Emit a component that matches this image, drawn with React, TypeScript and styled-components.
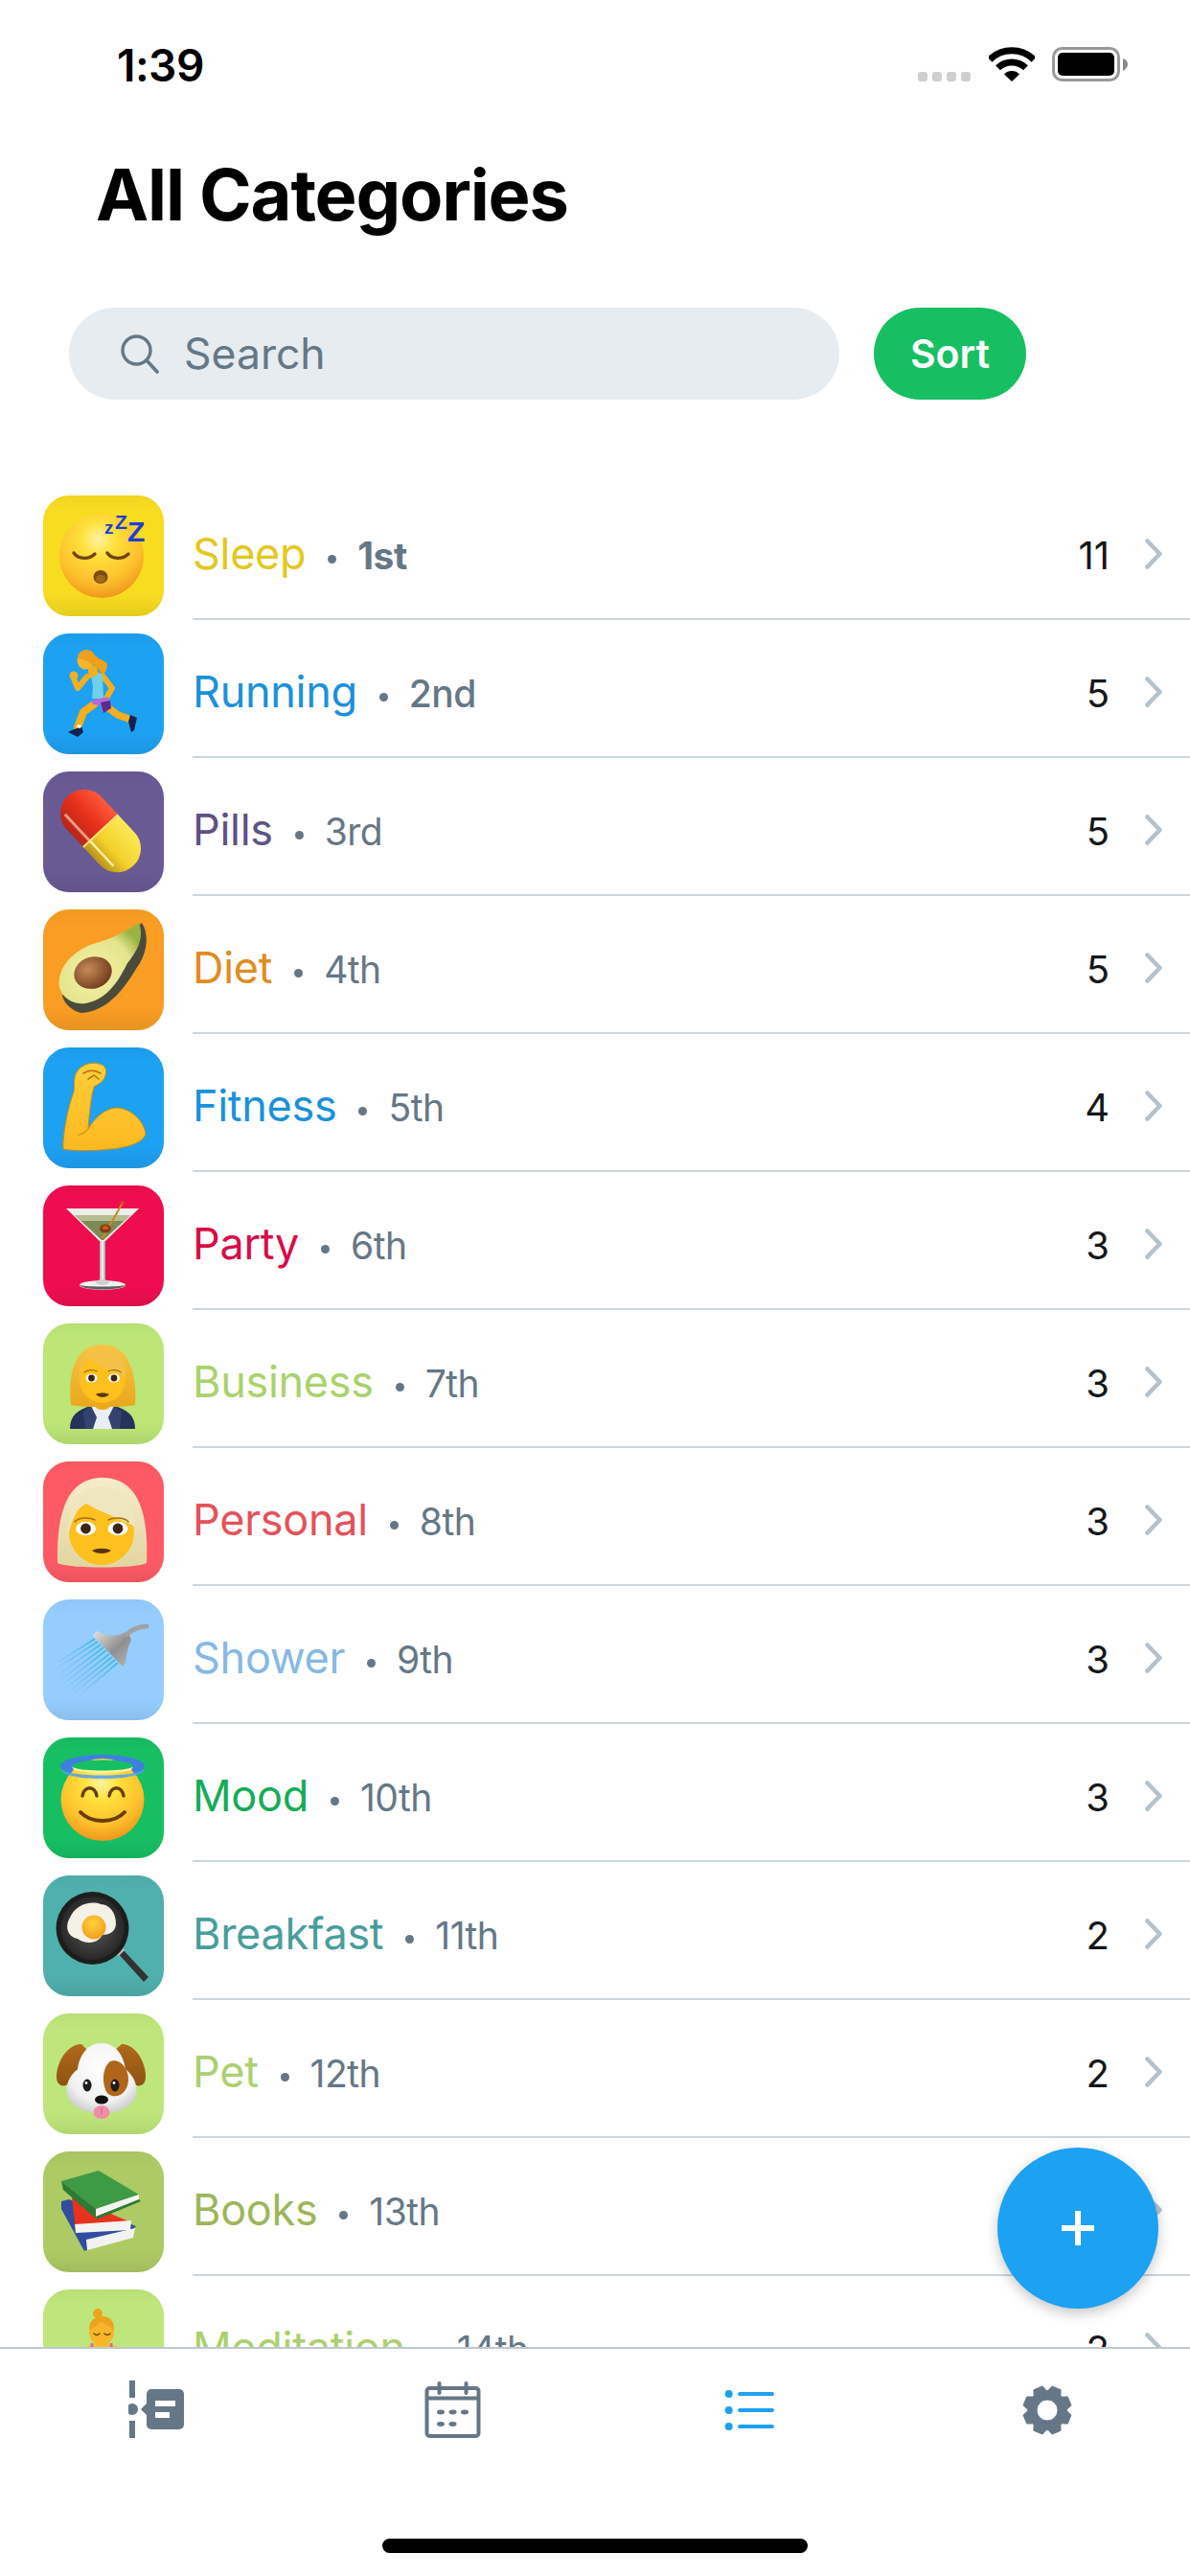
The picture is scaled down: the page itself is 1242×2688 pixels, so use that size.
import React from 'react';
import styled, { createGlobalStyle } from 'styled-components';

const GlobalStyle = createGlobalStyle`
  html, body {
    margin: 0;
    padding: 0;
    background: #fff;
  }
  * {
    box-sizing: border-box;
  }
`;

const Page = styled.div`
  position: relative;
  width: 1242px;
  height: 2688px;
  display: flex;
  flex-direction: column;
  overflow: hidden;
  background: #fff;
  font-family: Inter, 'Liberation Sans', sans-serif;
  color: #14171a;
`;

const StatusBar = styled.div`
  height: 130px;
  flex: none;
  display: flex;
  align-items: flex-start;
  padding: 49px 0 0 122px;
`;

const Time = styled.span`
  font-size: 46px;
  font-weight: 600;
  line-height: 38px;
  letter-spacing: -0.5px;
  color: #000;
`;

const StatusIcons = styled.div`
  margin-left: auto;
  margin-right: 64px;
  display: flex;
  align-items: flex-end;
  height: 36px;
`;

const SignalDots = styled.div`
  display: flex;
  gap: 5px;
  margin-right: 19px;
`;

const SignalDot = styled.span`
  width: 10px;
  height: 10px;
  border-radius: 3px;
  background: #cfcfcf;
`;

const WifiIcon = styled.svg`
  display: block;
  flex: none;
  margin-right: 18px;
`;

const BatteryIcon = styled.svg`
  display: block;
  flex: none;
`;

const Title = styled.h1`
  flex: none;
  margin: 0;
  height: 147px;
  line-height: 147px;
  padding-left: 100px;
  font-size: 74px;
  font-weight: 700;
  letter-spacing: -1.2px;
  color: #000;
`;

const SearchRow = styled.div`
  flex: none;
  margin-top: 44px;
  padding-left: 72px;
  display: flex;
  gap: 36px;
`;

const SearchField = styled.div`
  width: 804px;
  height: 96px;
  border-radius: 48px;
  background: #e6ecf0;
  display: flex;
  align-items: center;
  padding-left: 54px;
  gap: 26px;
  font-size: 44.5px;
  color: #657786;
`;

const SearchIcon = styled.svg`
  display: block;
  flex: none;
`;

const SortButton = styled.div`
  width: 159px;
  height: 96px;
  border-radius: 48px;
  background: #17bf63;
  color: #fff;
  display: flex;
  align-items: center;
  justify-content: center;
  font-size: 41px;
  font-weight: 600;
`;

const List = styled.div`
  flex: 1;
  min-height: 0;
  margin-top: 86px;
  overflow: hidden;
`;

const Row = styled.div`
  display: flex;
  height: 144px;
  padding-left: 45px;
`;

const IconTile = styled.div<{ $bg: string }>`
  position: relative;
  flex: none;
  width: 126px;
  height: 126px;
  margin-top: 14px;
  border-radius: 27px;
  overflow: hidden;
  background-color: ${({ $bg }) => $bg};
  background-image: linear-gradient(
    to bottom,
    rgba(0, 0, 0, 0.03),
    rgba(0, 0, 0, 0) 12%,
    rgba(0, 0, 0, 0) 82%,
    rgba(0, 0, 0, 0.07)
  );
`;

const EmojiSvg = styled.svg.attrs({ viewBox: '0 0 126 126', width: 126, height: 126 })`
  display: block;
`;

const RowBody = styled.div`
  flex: 1;
  margin-left: 30px;
  height: 144px;
  padding-top: 7px;
  line-height: 135px;
  border-bottom: 2px solid #ccd6dd;
  display: flex;
  align-items: baseline;
`;

const Name = styled.span<{ $color: string }>`
  font-size: 45px;
  letter-spacing: -0.3px;
  color: ${({ $color }) => $color};
`;

const Dot = styled.span`
  width: 9px;
  height: 9px;
  border-radius: 50%;
  background: #657786;
  margin: 11px 22px 0 23px;
  align-self: center;
`;

const Rank = styled.span<{ $weight: number }>`
  font-size: 39px;
  letter-spacing: -0.5px;
  color: #657786;
  font-weight: ${({ $weight }) => $weight};
`;

const Count = styled.span`
  margin-left: auto;
  margin-right: 37px;
  font-size: 40px;
  color: #14171a;
`;

const Chevron = styled.svg`
  display: block;
  flex: none;
  align-self: center;
  margin-right: 29px;
`;

const TabBar = styled.div`
  flex: none;
  position: relative;
  height: 239px;
  border-top: 2px solid #bcc8d2;
  background: #fff;
  padding: 33px 122px 0 134px;
  display: flex;
  justify-content: space-between;
  align-items: flex-start;
`;

const TabIcon = styled.svg.attrs({ viewBox: '0 0 60 64', width: 60, height: 64 })`
  display: block;
`;

const HomeIndicator = styled.div`
  position: absolute;
  left: 399px;
  top: 198px;
  width: 444px;
  height: 15px;
  border-radius: 8px;
  background: #000;
`;

const Fab = styled.div`
  position: absolute;
  left: 1041px;
  top: 2241px;
  width: 168px;
  height: 168px;
  border-radius: 50%;
  background: #1da1f2;
  box-shadow: 0 5px 14px rgba(0, 0, 0, 0.22);
  display: flex;
  align-items: center;
  justify-content: center;
`;

const FACE_STOPS = (
  <>
    <stop offset="0" stopColor="#fff3a0" />
    <stop offset="0.28" stopColor="#ffe03a" />
    <stop offset="0.68" stopColor="#fdbf2c" />
    <stop offset="1" stopColor="#ec8c18" />
  </>
);

const SleepEmoji = () => (
  <EmojiSvg>
    <defs>
      <radialGradient id="sleepFace" cx="0.46" cy="0.3" r="0.76">{FACE_STOPS}</radialGradient>
    </defs>
    <ellipse cx="61" cy="63" rx="44" ry="44" fill="url(#sleepFace)" />
    <path d="M32 60c5 7 16 7 22 1" fill="none" stroke="#6e4510" strokeWidth="3.4" strokeLinecap="round" />
    <path d="M67 60c5 7 16 7 22 1" fill="none" stroke="#6e4510" strokeWidth="3.4" strokeLinecap="round" />
    <ellipse cx="60" cy="85" rx="7.5" ry="7" fill="#7c4c12" />
    <ellipse cx="60" cy="87" rx="5" ry="4" fill="#a06a1c" />
    <g fill="#1c3fd2" fontFamily="'Liberation Sans', sans-serif" fontWeight="700">
      <text x="64" y="40" fontSize="19">z</text>
      <text x="75" y="35" fontSize="21">Z</text>
      <text x="88" y="48" fontSize="30">Z</text>
    </g>
  </EmojiSvg>
);

const RunningEmoji = () => (
  <EmojiSvg>
    <g fill="none" stroke="#f4ae1e" strokeLinecap="round" strokeLinejoin="round">
      <path d="M46 45L36 57L32 47" strokeWidth="6" />
      <path d="M62 44L72 57L64 71" strokeWidth="6" />
      <path d="M53 74L42 82L36 98" strokeWidth="8" />
      <path d="M66 76L78 85L92 90" strokeWidth="7.5" />
    </g>
    <circle cx="32" cy="44" r="4.5" fill="#f4ae1e" />
    <path d="M50 44L59 41L62 44L63 68L51 68L52 56Z" fill="#6fd0ea" />
    <path d="M50 70L68 66L71 78L62 82L60 75L52 74Z" fill="#b46bd9" />
    <path d="M60 72L70 70L71 78L63 83Z" fill="#5c2a91" />
    <path d="M49 47C46 40 47 36 48 32L56 34L58 42Z" fill="#f4ae1e" />
    <ellipse cx="44" cy="28" rx="8.5" ry="9.5" fill="#f7b52a" />
    <path d="M36 26C36 18 46 14 52 20C56 26 62 28 66 30C68 34 66 40 62 44C58 38 56 32 50 32C46 28 40 26 36 26Z" fill="#eda01c" />
    <path d="M30 101L40 97L42 103L36 108L26 103Z" fill="#13224f" />
    <path d="M36 95L40 96L39 99L35 98Z" fill="#fff" />
    <path d="M91 85L98 88L95 101L92 103L89 92Z" fill="#13224f" />
  </EmojiSvg>
);

const PillsEmoji = () => (
  <EmojiSvg>
    <defs>
      <linearGradient id="pillRed" x1="0" y1="0" x2="0" y2="1">
        <stop offset="0" stopColor="#ff5a3c" />
        <stop offset="0.5" stopColor="#e8301a" />
        <stop offset="1" stopColor="#b3261a" />
      </linearGradient>
      <linearGradient id="pillYellow" x1="0" y1="0" x2="0" y2="1">
        <stop offset="0" stopColor="#fdea58" />
        <stop offset="0.6" stopColor="#f3d02a" />
        <stop offset="1" stopColor="#b8921c" />
      </linearGradient>
      <clipPath id="pillClip">
        <rect x="-50" y="-25" width="100" height="50" rx="25" />
      </clipPath>
    </defs>
    <g transform="translate(60 62) rotate(47)" clipPath="url(#pillClip)">
      <rect x="-50" y="-25" width="50" height="50" fill="url(#pillRed)" />
      <rect x="0" y="-25" width="50" height="50" fill="url(#pillYellow)" />
      <rect x="-38" y="14" width="38" height="3" fill="#f7b7a0" opacity="0.8" />
      <rect x="0" y="14" width="36" height="2.5" fill="#fff6b0" opacity="0.9" />
      <rect x="-1" y="-25" width="2" height="50" fill="#f9e27a" />
    </g>
  </EmojiSvg>
);

const AvocadoEmoji = () => (
  <EmojiSvg>
    <defs>
      <radialGradient id="avoFlesh" cx="0.42" cy="0.62" r="0.66">
        <stop offset="0" stopColor="#f6f0a4" />
        <stop offset="0.72" stopColor="#e3e48c" />
        <stop offset="1" stopColor="#9ab443" />
      </radialGradient>
      <radialGradient id="avoPit" cx="0.4" cy="0.35" r="0.7">
        <stop offset="0" stopColor="#c68a58" />
        <stop offset="1" stopColor="#6e3a1c" />
      </radialGradient>
    </defs>
    <path d="M103 14C111 26 109 46 97 62C85 82 68 106 40 108C30 106 22 98 20 90C40 60 80 30 103 14Z" fill="#4b4b3c" />
    <path d="M100 14C106 30 98 44 88 56C80 72 68 94 44 98C28 100 14 88 17 72C20 54 36 42 52 36C68 32 84 24 100 14Z" fill="url(#avoFlesh)" />
    <ellipse cx="52" cy="66" rx="20" ry="16.5" transform="rotate(-18 52 66)" fill="url(#avoPit)" />
  </EmojiSvg>
);

const MuscleEmoji = () => (
  <EmojiSvg>
    <defs>
      <linearGradient id="armFill" x1="0" y1="0" x2="0" y2="1">
        <stop offset="0" stopColor="#ffd03a" />
        <stop offset="1" stopColor="#fbb81f" />
      </linearGradient>
    </defs>
    <path
      d="M33 31C35 20 48 14 58 17C65 18 67 24 65 29C64 35 58 38 53 41C50 52 48 70 47 85C52 76 63 64 76 63C92 63 105 77 107 90C105 100 85 106 60 107C45 108 30 108 21 106C20 92 26 62 32 46C33 40 32 36 33 31Z"
      fill="url(#armFill)"
      stroke="#cf8a17"
      strokeWidth="1"
    />
    <path d="M42 27C48 23 55 24 60 27M47 33L53 29L58 33" fill="none" stroke="#b97712" strokeWidth="1.6" strokeLinecap="round" />
    <path d="M47 85C44 88 40 91 37 91" fill="none" stroke="#d9951b" strokeWidth="1.4" strokeLinecap="round" />
  </EmojiSvg>
);

const MartiniEmoji = () => (
  <EmojiSvg>
    <defs>
      <linearGradient id="stemGlass" x1="0" y1="0" x2="1" y2="0">
        <stop offset="0" stopColor="#a7a9a8" />
        <stop offset="0.5" stopColor="#f6f6f6" />
        <stop offset="1" stopColor="#9a9c9b" />
      </linearGradient>
    </defs>
    <path d="M24 24L100 24L64 59L60 59Z" fill="#ededea" />
    <path d="M33 31L91 31L63 57L61 57Z" fill="#7c8a55" />
    <path d="M33 31L91 31L84 37L40 37Z" fill="#b6bd92" />
    <path d="M83 18L62 55" stroke="#c98a1e" strokeWidth="2" />
    <circle cx="83" cy="18" r="1.8" fill="#d24a1c" />
    <ellipse cx="65" cy="45" rx="6" ry="4.5" fill="#8a3b18" />
    <ellipse cx="65" cy="44" rx="3" ry="2" fill="#c1601f" />
    <rect x="59" y="58" width="6" height="42" fill="url(#stemGlass)" />
    <ellipse cx="62" cy="104" rx="24" ry="5" fill="#f1f1f0" />
    <path d="M38 104C42 110 82 110 86 104C78 106 46 106 38 104Z" fill="#5d5e5e" />
    <ellipse cx="62" cy="101" rx="7" ry="3" fill="#cfcfcf" />
  </EmojiSvg>
);

const BusinessEmoji = () => (
  <EmojiSvg>
    <defs>
      <linearGradient id="bizHair" x1="0" y1="0" x2="0" y2="1">
        <stop offset="0" stopColor="#f6c544" />
        <stop offset="1" stopColor="#e9a81d" />
      </linearGradient>
    </defs>
    <path d="M28 110C28 96 36 90 50 86L74 86C88 90 96 96 96 110Z" fill="#25325a" />
    <path d="M50 86L74 86L72 110L52 110Z" fill="#e9eef2" />
    <path d="M50 86L56 98L52 110L44 110L42 92Z" fill="#33426f" />
    <path d="M74 86L68 98L72 110L80 110L82 92Z" fill="#33426f" />
    <path d="M29 85C26 58 30 22 62 22C92 22 98 58 96 85C84 88 40 88 29 85Z" fill="url(#bizHair)" />
    <rect x="54" y="72" width="16" height="18" rx="6" fill="#eda91e" />
    <ellipse cx="62" cy="58" rx="24" ry="25" fill="#fdc01d" />
    <path d="M38 60C39 48 42 40 46 35C56 44 72 50 86 56C88 38 78 26 62 26C46 26 35 42 38 60Z" fill="#f4c146" />
    <ellipse cx="50.5" cy="57" rx="6" ry="4.6" fill="#fff" />
    <ellipse cx="74" cy="57" rx="6" ry="4.6" fill="#fff" />
    <circle cx="50.5" cy="57" r="3.4" fill="#3d2610" />
    <circle cx="74" cy="57" r="3.4" fill="#3d2610" />
    <path d="M43 51C46 48 53 48 56 50M68 50C71 48 78 48 81 51" fill="none" stroke="#a4701c" strokeWidth="1.2" strokeLinecap="round" />
    <path d="M55 74C59 72 65 72 69 74C65 78 59 78 55 74Z" fill="#5c3212" />
  </EmojiSvg>
);

const PersonalEmoji = () => (
  <EmojiSvg>
    <defs>
      <linearGradient id="blondeHair" x1="0" y1="0" x2="0" y2="1">
        <stop offset="0" stopColor="#f5eccb" />
        <stop offset="1" stopColor="#e2d5a0" />
      </linearGradient>
    </defs>
    <path d="M15 106C14 60 22 17 62 17C102 17 110 60 108 106C98 112 26 112 15 106Z" fill="url(#blondeHair)" />
    <ellipse cx="61" cy="74" rx="34" ry="34" fill="#fdc01d" />
    <path d="M26 78C29 62 36 50 42 42C56 52 78 58 96 68C96 42 82 26 60 26C38 28 23 52 26 78Z" fill="#efe5bf" />
    <ellipse cx="44.5" cy="70" rx="10.5" ry="7.2" fill="#fff" />
    <ellipse cx="78" cy="70" rx="10.5" ry="7.2" fill="#fff" />
    <circle cx="44.5" cy="70" r="5.4" fill="#3d2610" />
    <circle cx="78" cy="70" r="5.4" fill="#3d2610" />
    <path d="M33 63C37 58 48 58 54 61M68 61C74 58 85 58 89 63" fill="none" stroke="#a4701c" strokeWidth="1.6" strokeLinecap="round" />
    <path d="M51 93C56 90 66 90 71 93C66 97 56 97 51 93Z" fill="#5c3212" />
  </EmojiSvg>
);

const ShowerEmoji = () => (
  <EmojiSvg>
    <defs>
      <linearGradient id="spray" x1="1" y1="0" x2="0" y2="1">
        <stop offset="0" stopColor="#3cbce0" />
        <stop offset="1" stopColor="#7db4ea" stopOpacity="0.15" />
      </linearGradient>
      <linearGradient id="headMetal" x1="0" y1="0" x2="1" y2="1">
        <stop offset="0" stopColor="#e4e4e4" />
        <stop offset="0.55" stopColor="#8f8f8f" />
        <stop offset="1" stopColor="#b9b9b9" />
      </linearGradient>
    </defs>
    <g stroke="url(#spray)" strokeWidth="1.8" fill="none">
      <path d="M54 41L15 66" />
      <path d="M57 44L14 72" />
      <path d="M60 47L16 78" />
      <path d="M63 50L18 84" />
      <path d="M66 53L21 88" />
      <path d="M69 57L24 92" />
      <path d="M72 60L28 95" />
      <path d="M75 63L33 97" />
      <path d="M78 66L40 98" />
    </g>
    <path d="M52 38L83 70L86 66C87 58 88 50 92 42L88 33C80 38 68 40 56 33Z" fill="url(#headMetal)" />
    <path d="M88 36C92 32 100 28 108 28" fill="none" stroke="#a2a2a2" strokeWidth="5" strokeLinecap="round" />
  </EmojiSvg>
);

const AngelEmoji = () => (
  <EmojiSvg>
    <defs>
      <radialGradient id="angelFace" cx="0.48" cy="0.3" r="0.75">{FACE_STOPS}</radialGradient>
    </defs>
    <ellipse cx="62" cy="30" rx="44" ry="12" fill="#3f7fe0" />
    <ellipse cx="62" cy="65" rx="43.5" ry="43" fill="url(#angelFace)" />
    <path d="M18 32C20 42 104 42 106 32C106 38 92 43 62 43C32 43 18 38 18 32Z" fill="#5aa2ee" opacity="0.9" />
    <ellipse cx="62" cy="30" rx="32" ry="6.5" fill="#17bf63" />
    <path d="M30 30C32 36 92 36 94 30L92 34C80 38 44 38 32 34Z" fill="#fff3a0" />
    <path d="M41 61C43 50 54 50 56 61M69 61C71 50 82 50 84 61" fill="none" stroke="#6b3d0d" strokeWidth="3.4" strokeLinecap="round" />
    <path d="M39 78C50 90 74 90 85 78" fill="none" stroke="#6b3d0d" strokeWidth="4" strokeLinecap="round" />
  </EmojiSvg>
);

const EggEmoji = () => (
  <EmojiSvg>
    <defs>
      <radialGradient id="panFill" cx="0.5" cy="0.5" r="0.55">
        <stop offset="0" stopColor="#5a5a5a" />
        <stop offset="1" stopColor="#232323" />
      </radialGradient>
      <radialGradient id="yolkFill" cx="0.45" cy="0.35" r="0.7">
        <stop offset="0" stopColor="#ffd23c" />
        <stop offset="1" stopColor="#f09a1c" />
      </radialGradient>
    </defs>
    <path d="M76 79L82 76L110 106L105 111Z" fill="#333" />
    <path d="M74 78L80 73L85 78L79 84Z" fill="#bbb" />
    <circle cx="51.5" cy="55" r="38" fill="#1d1d1d" />
    <circle cx="51.5" cy="55" r="33" fill="url(#panFill)" />
    <path d="M28 44C34 30 50 26 60 30C70 30 76 40 76 50C76 58 70 62 62 62C56 72 44 72 36 66C26 64 22 54 28 44Z" fill="#f4f1e6" />
    <circle cx="53" cy="54" r="12.5" fill="url(#yolkFill)" />
  </EmojiSvg>
);

const DogEmoji = () => (
  <EmojiSvg>
    <defs>
      <radialGradient id="dogFace" cx="0.5" cy="0.35" r="0.7">
        <stop offset="0" stopColor="#ffffff" />
        <stop offset="0.7" stopColor="#f1f1f1" />
        <stop offset="1" stopColor="#c6c6c6" />
      </radialGradient>
      <linearGradient id="dogEar" x1="0" y1="0" x2="0" y2="1">
        <stop offset="0" stopColor="#b06a1a" />
        <stop offset="1" stopColor="#8f5212" />
      </linearGradient>
    </defs>
    <path d="M40 32C26 32 14 50 14 66C14 76 22 78 28 72C36 64 44 52 48 40Z" fill="url(#dogEar)" />
    <path d="M82 32C96 32 107 50 107 66C107 76 99 78 93 72C85 64 77 52 73 40Z" fill="url(#dogEar)" />
    <path d="M61 31C76 31 84 44 86 58C96 66 100 78 96 88C90 100 76 104 61 104C46 104 32 100 26 88C22 78 26 66 36 58C38 44 46 31 61 31Z" fill="url(#dogFace)" />
    <path d="M70 50C80 46 90 58 89 70C88 84 76 90 68 84C62 78 60 58 70 50Z" fill="#b0661a" />
    <ellipse cx="46" cy="75" rx="4.5" ry="6.5" fill="#1d1d1d" />
    <ellipse cx="75" cy="75" rx="4.5" ry="6.5" fill="#1d1d1d" />
    <circle cx="45" cy="72.5" r="1.4" fill="#fff" />
    <circle cx="74" cy="72.5" r="1.4" fill="#fff" />
    <ellipse cx="61" cy="90" rx="7" ry="4.5" fill="#111" />
    <ellipse cx="61" cy="103" rx="8.5" ry="7" fill="#f08ca8" />
    <path d="M61 98L61 105" stroke="#d66f8c" strokeWidth="1.4" />
  </EmojiSvg>
);

const BooksEmoji = () => (
  <EmojiSvg>
    <path d="M19 52L27 50L97 78L90 85L43 104L19 60Z" fill="#2f4ea0" />
    <path d="M45 92L96 80L94 90L46 103Z" fill="#f2f2f0" />
    <path d="M30 48L92 74L88 78L34 84Z" fill="#e8321e" />
    <path d="M33 76L92 72L91 82L34 85Z" fill="#f4f4f2" />
    <path d="M30 48L34 84L33 76Z" fill="#b72315" />
    <path d="M19 31L58 20L100 45L55 60Z" fill="#3d9a45" />
    <path d="M19 31L55 60L55 70L21 40Z" fill="#2c7a36" />
    <path d="M55 60L100 45L100 50L55 68Z" fill="#f4f4f2" />
    <path d="M55 68L100 50L102 52L56 71Z" fill="#2c7a36" />
  </EmojiSvg>
);

const MeditationEmoji = () => (
  <EmojiSvg>
    <circle cx="57" cy="25" r="5" fill="#eda41c" />
    <path d="M45 60C50 56 72 56 77 60L80 90L42 90Z" fill="#f8bf24" />
    <path d="M51 56L51 66M71 56L71 66" stroke="#d66f8c" strokeWidth="3" />
    <ellipse cx="61" cy="44" rx="13" ry="15" fill="#f7b52a" />
    <path d="M48 42C48 32 54 28 62 28C70 28 75 34 74 43C70 38 64 36 60 34C56 38 52 40 48 42Z" fill="#eda41c" />
    <path d="M53 46C55 48 57 48 59 46M64 46C66 48 68 48 70 46" fill="none" stroke="#6e4510" strokeWidth="1.4" strokeLinecap="round" />
  </EmojiSvg>
);

type Category = {
  name: string;
  rank: string;
  count: number;
  bg: string;
  color: string;
  weight: number;
  Emoji: () => React.JSX.Element;
};

const categories: Category[] = [
  { name: 'Sleep', rank: '1st', count: 11, bg: '#f7dc20', color: '#e3c81e', weight: 700, Emoji: SleepEmoji },
  { name: 'Running', rank: '2nd', count: 5, bg: '#1da1f2', color: '#1a91da', weight: 500, Emoji: RunningEmoji },
  { name: 'Pills', rank: '3rd', count: 5, bg: '#6a5a94', color: '#5f5185', weight: 400, Emoji: PillsEmoji },
  { name: 'Diet', rank: '4th', count: 5, bg: '#f99d23', color: '#e08d1f', weight: 400, Emoji: AvocadoEmoji },
  { name: 'Fitness', rank: '5th', count: 4, bg: '#1da1f2', color: '#1a91da', weight: 400, Emoji: MuscleEmoji },
  { name: 'Party', rank: '6th', count: 3, bg: '#f00d4f', color: '#d80c47', weight: 400, Emoji: MartiniEmoji },
  { name: 'Business', rank: '7th', count: 3, bg: '#bde677', color: '#aad26b', weight: 400, Emoji: BusinessEmoji },
  { name: 'Personal', rank: '8th', count: 3, bg: '#fe5a65', color: '#e5515b', weight: 400, Emoji: PersonalEmoji },
  { name: 'Shower', rank: '9th', count: 3, bg: '#95cdff', color: '#86b8e5', weight: 400, Emoji: ShowerEmoji },
  { name: 'Mood', rank: '10th', count: 3, bg: '#17bf63', color: '#15ac59', weight: 400, Emoji: AngelEmoji },
  { name: 'Breakfast', rank: '11th', count: 2, bg: '#50b0ad', color: '#489e9c', weight: 400, Emoji: EggEmoji },
  { name: 'Pet', rank: '12th', count: 2, bg: '#bfe67a', color: '#acd06e', weight: 400, Emoji: DogEmoji },
  { name: 'Books', rank: '13th', count: 2, bg: '#aeca64', color: '#9db65a', weight: 400, Emoji: BooksEmoji },
  { name: 'Meditation', rank: '14th', count: 2, bg: '#bfe67a', color: '#acd06e', weight: 400, Emoji: MeditationEmoji },
];

// eight rounded teeth, rotated half a step so a notch sits on top
const gearPath = (cx: number, cy: number) => {
  const pts: string[] = [];
  for (let i = 0; i < 8; i++) {
    const a = i * 45 + 22.5;
    [
      [a - 20, 20.5],
      [a - 11, 25.5],
      [a + 11, 25.5],
      [a + 20, 20.5],
    ].forEach(([deg, r]) => {
      const rad = (deg * Math.PI) / 180;
      pts.push(`${(cx + r * Math.cos(rad)).toFixed(2)} ${(cy + r * Math.sin(rad)).toFixed(2)}`);
    });
  }
  const hole = `M${cx - 11} ${cy}a11 11 0 1 0 22 0a11 11 0 1 0 -22 0Z`;
  return `M${pts.join('L')}Z${hole}`;
};

const App = () => {
  return (
    <Page>
      <GlobalStyle />
      <StatusBar>
        <Time>1:39</Time>
        <StatusIcons>
          <SignalDots>
            <SignalDot />
            <SignalDot />
            <SignalDot />
            <SignalDot />
          </SignalDots>
          <WifiIcon width="48" height="36" viewBox="0 0 48 36">
            <g fill="none" stroke="#000" strokeWidth="7">
              <path d="M1 13.2A33 33 0 0 1 47 13.2" />
              <path d="M9.5 21.7A21 21 0 0 1 38.5 21.7" />
            </g>
            <path d="M16 28.5A11 11 0 0 1 32 28.5L24 36Z" fill="#000" />
          </WifiIcon>
          <BatteryIcon width="80" height="36" viewBox="0 0 80 36">
            <rect x="1.5" y="1.5" width="68" height="33" rx="9" fill="none" stroke="#999" strokeWidth="3" />
            <rect x="6" y="6" width="59" height="24" rx="5" fill="#000" />
            <path d="M74 12C77 13 79 15 79 18C79 21 77 23 74 25Z" fill="#888" />
          </BatteryIcon>
        </StatusIcons>
      </StatusBar>

      <Title>All Categories</Title>

      <SearchRow>
        <SearchField>
          <SearchIcon width="40" height="41" viewBox="0 0 40 41">
            <circle cx="16.5" cy="16.5" r="14.5" fill="none" stroke="#657786" strokeWidth="3.4" />
            <path d="M27 27L38 39" stroke="#657786" strokeWidth="3.6" strokeLinecap="round" />
          </SearchIcon>
          Search
        </SearchField>
        <SortButton>Sort</SortButton>
      </SearchRow>

      <List>
        {categories.map(({ name, rank, count, bg, color, weight, Emoji }) => (
          <Row key={name}>
            <IconTile $bg={bg}>
              <Emoji />
            </IconTile>
            <RowBody>
              <Name $color={color}>{name}</Name>
              <Dot />
              <Rank $weight={weight}>{rank}</Rank>
              <Count>{count}</Count>
              <Chevron width="18" height="32" viewBox="0 0 18 32">
                <path
                  d="M2.5 2.5L15.5 16L2.5 29.5"
                  fill="none"
                  stroke="#b5c2cc"
                  strokeWidth="4.6"
                  strokeLinecap="round"
                  strokeLinejoin="round"
                />
              </Chevron>
            </RowBody>
          </Row>
        ))}
      </List>

      <TabBar>
        <TabIcon>
          <g fill="#657786">
            <rect x="1" y="0" width="6" height="18" />
            <rect x="1" y="42" width="6" height="18" />
            <circle cx="4" cy="30" r="6" />
            <rect x="19" y="9" width="39" height="42" rx="5" />
            <path d="M13 30L19 24L19 36Z" />
          </g>
          <rect x="28" y="21" width="21" height="6" fill="#fff" />
          <rect x="28" y="33" width="15" height="6" fill="#fff" />
        </TabIcon>
        <TabIcon>
          <g fill="none" stroke="#657786">
            <rect x="2.5" y="8" width="54" height="50" rx="3" strokeWidth="4" />
            <path d="M2.5 18.5H56.5" strokeWidth="4" />
            <path d="M15.5 3V13M43.5 3V13" strokeWidth="4" strokeLinecap="round" />
          </g>
          <g fill="#657786">
            <ellipse cx="17" cy="33" rx="4" ry="2.4" />
            <ellipse cx="29.5" cy="33" rx="4" ry="2.4" />
            <ellipse cx="42" cy="33" rx="4" ry="2.4" />
            <ellipse cx="17" cy="45.5" rx="4" ry="2.4" />
            <ellipse cx="29.5" cy="45.5" rx="4" ry="2.4" />
          </g>
        </TabIcon>
        <TabIcon>
          <g fill="#1da1f2">
            <circle cx="9.7" cy="14" r="4" />
            <circle cx="9.7" cy="31" r="4" />
            <circle cx="9.7" cy="48" r="4" />
          </g>
          <path d="M21 14H55M21 31H55M21 48H55" stroke="#1da1f2" strokeWidth="4" strokeLinecap="round" />
        </TabIcon>
        <TabIcon>
          <path d={gearPath(33, 31)} fill="#657786" fillRule="evenodd" stroke="#657786" strokeWidth="1" strokeLinejoin="round" />
        </TabIcon>
        <HomeIndicator />
      </TabBar>

      <Fab>
        <svg width="34" height="36" viewBox="0 0 34 36">
          <path d="M17 0V36M0 18H34" stroke="#fff" strokeWidth="6" />
        </svg>
      </Fab>
    </Page>
  );
};

export default App;
